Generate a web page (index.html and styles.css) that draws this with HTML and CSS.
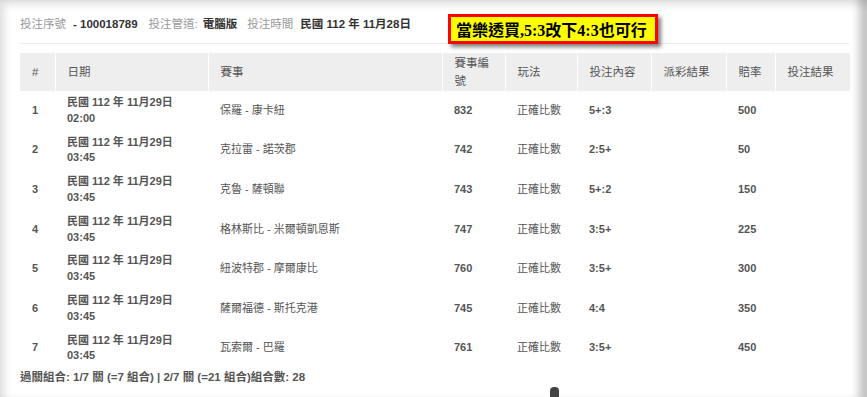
FILE: index.html
```html
<!DOCTYPE html>
<html lang="zh-Hant">
<head>
<meta charset="utf-8">
<link rel="stylesheet" href="styles.css">
</head>
<body>
<div class="frame">
  <div class="info"><span class="lbl">投注序號</span><span class="val v1">-&nbsp;100018789</span><span class="lbl l2">投注管道:</span><span class="val v2">電腦版</span><span class="lbl l3">投注時間</span><span class="val v3">民國 112 年 11月28日</span></div>
  <div class="rule"></div>
  <table class="bets">
    <colgroup>
      <col style="width:35px"><col style="width:153px"><col style="width:234px"><col style="width:63px"><col style="width:72px"><col style="width:74px"><col style="width:75px"><col style="width:49px"><col style="width:75px">
    </colgroup>
    <thead>
      <tr><th>#</th><th>日期</th><th>賽事</th><th>賽事編號</th><th>玩法</th><th>投注內容</th><th>派彩結果</th><th>賠率</th><th>投注結果</th></tr>
    </thead>
    <tbody>
      <tr><td class="b">1</td><td class="b">民國 112 年 11月29日<br>02:00</td><td>保羅 - 康卡紐</td><td class="b">832</td><td>正確比數</td><td class="b">5+:3</td><td></td><td class="b">500</td><td></td></tr>
      <tr><td class="b">2</td><td class="b">民國 112 年 11月29日<br>03:45</td><td>克拉雷 - 諾茨郡</td><td class="b">742</td><td>正確比數</td><td class="b">2:5+</td><td></td><td class="b">50</td><td></td></tr>
      <tr><td class="b">3</td><td class="b">民國 112 年 11月29日<br>03:45</td><td>克魯 - 薩頓聯</td><td class="b">743</td><td>正確比數</td><td class="b">5+:2</td><td></td><td class="b">150</td><td></td></tr>
      <tr><td class="b">4</td><td class="b">民國 112 年 11月29日<br>03:45</td><td>格林斯比 - 米爾頓凱恩斯</td><td class="b">747</td><td>正確比數</td><td class="b">3:5+</td><td></td><td class="b">225</td><td></td></tr>
      <tr><td class="b">5</td><td class="b">民國 112 年 11月29日<br>03:45</td><td>紐波特郡 - 摩爾康比</td><td class="b">760</td><td>正確比數</td><td class="b">3:5+</td><td></td><td class="b">300</td><td></td></tr>
      <tr><td class="b">6</td><td class="b">民國 112 年 11月29日<br>03:45</td><td>薩爾福德 - 斯托克港</td><td class="b">745</td><td>正確比數</td><td class="b">4:4</td><td></td><td class="b">350</td><td></td></tr>
      <tr><td class="b">7</td><td class="b">民國 112 年 11月29日<br>03:45</td><td>瓦索爾 - 巴羅</td><td class="b">761</td><td>正確比數</td><td class="b">3:5+</td><td></td><td class="b">450</td><td></td></tr>
    </tbody>
  </table>
  <div class="combo">過關組合: 1/7 關 (=7 組合) | 2/7 關 (=21 組合)組合數: 28</div>
  <div class="note">當樂透買<span class="num">,5:3</span>改下<span class="num">4:3</span>也可行</div>
  <div class="thumb"></div>
</div>
</body>
</html>
```
FILE: styles.css
```css
html, body {
  margin: 0;
  padding: 0;
  background: #fff;
}
.frame {
  position: relative;
  width: 867px;
  height: 397px;
  box-sizing: border-box;
  padding: 16px 0 0 20px;
  overflow: hidden;
  font-family: "Liberation Sans", "Noto Sans CJK TC", Arial, sans-serif;
  color: #555;
  box-shadow: inset 7px 7px 8px -3px rgba(0,0,0,0.13), inset -13px 0 9px -5px rgba(0,0,0,0.24);
}
.info {
  font-size: 11.5px;
  line-height: 16px;
  white-space: nowrap;
  display: flex;
}
.info .lbl { color: #999; }
.info .val { color: #333; font-weight: bold; }
.info .v1 { margin-left: 7px; }
.info .l2 { margin-left: 11px; }
.info .v2 { margin-left: 5px; }
.info .l3 { margin-left: 10px; }
.info .v3 { margin-left: 7px; }
.rule {
  width: 831px;
  margin-left: -1px;
  height: 1px;
  background: #eee;
  margin-top: 11px;
}
.bets {
  margin-top: 9px;
  width: 830px;
  table-layout: fixed;
  border-collapse: collapse;
  font-size: 11px;
}
.bets th {
  background: #eeeeee;
  height: 38px;
  padding: 0 8px 0 12px;
  text-align: left;
  font-weight: normal;
  font-size: 11.5px;
  line-height: 18px;
  color: #555;
  border-left: 1px solid #fff;
  border-right: 1px solid #fff;
  box-sizing: border-box;
}
.bets th:first-child { border-left: 0; }
.bets th:last-child { border-right: 0; }
.bets td {
  padding: 4px 8px 4px 12px;
  line-height: 15.8px;
  color: #555;
  vertical-align: middle;
  white-space: nowrap;
}
.bets td.b { font-weight: bold; color: #555; }
.combo {
  margin-top: 1px;
  font-size: 11.5px;
  line-height: 16px;
  font-weight: bold;
  color: #555;
}
.note {
  position: absolute;
  left: 448px;
  top: 14px;
  width: 210px;
  height: 30px;
  box-sizing: border-box;
  border: 3px solid #f00;
  background: #ff0;
  padding-left: 5px;
  font-family: "Noto Sans CJK TC", sans-serif;
  font-weight: bold;
  font-size: 16px;
  line-height: 24px;
  color: #000;
  white-space: nowrap;
  box-shadow: 3px 3px 4px rgba(0,0,0,0.5);
}
.note .num { font-family: "Liberation Serif", serif; }
.thumb {
  position: absolute;
  left: 550px;
  top: 387px;
  width: 9px;
  height: 14px;
  border-radius: 4px 4px 0 0;
  background: #444;
}
```
